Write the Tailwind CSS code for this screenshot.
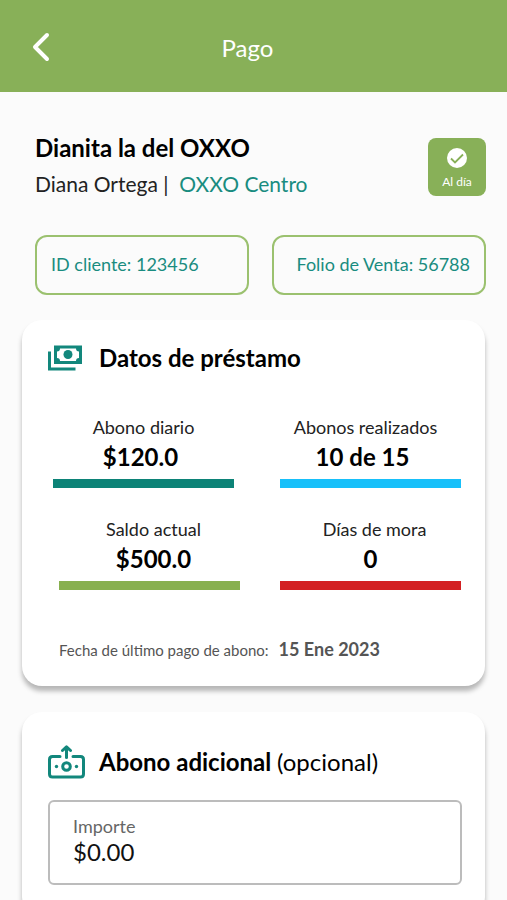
<!DOCTYPE html>
<html lang="es">
  <head>
    <meta charset="UTF-8" />
    <meta name="viewport" content="width=device-width, initial-scale=1.0" />
    <title>Pago</title>
    <script src="https://cdn.jsdelivr.net/npm/@tailwindcss/browser@4"></script>
  </head>
  <body class="min-h-screen overflow-x-hidden bg-[#fbfbfb] font-['Lato',sans-serif] text-black">
    <header class="grid h-[92px] grid-cols-[1fr_auto_1fr] items-center bg-[#88b058] pr-3 text-white">
      <button type="button" aria-label="Regresar" class="ml-8 w-6 cursor-pointer">
        <svg class="h-8 w-5" viewBox="0 0 20 32" fill="none" stroke="currentColor" stroke-width="4" stroke-linecap="round" stroke-linejoin="round">
          <path d="M15 5 L3 17 L15 29" />
        </svg>
      </button>
      <h1 class="pt-1 text-2xl">Pago</h1>
    </header>

    <main class="pb-8">
      <!-- Cliente -->
      <section class="flex items-start justify-between pt-[46px] pr-[21px] pl-[35px]">
        <div class="-mt-1">
          <h2 class="text-2xl leading-7 font-bold">Dianita la del OXXO</h2>
          <p class="mt-2 text-[21px] leading-7 whitespace-pre text-[#222]">Diana Ortega |  <a href="#" class="text-[#198c80]">OXXO Centro</a></p>
        </div>
        <div class="flex size-[58px] flex-col items-center rounded-lg bg-[#88b058] pt-2.5 text-white">
          <svg class="size-5" viewBox="0 0 20 20">
            <circle cx="10" cy="10" r="10" fill="#fff" />
            <path d="M4 10.5 L8 14.5 L16 6.5" fill="none" stroke="#88b058" stroke-width="1.8" />
          </svg>
          <span class="mt-1.5 text-xs leading-4">Al día</span>
        </div>
      </section>

      <div class="mt-[37px] grid grid-cols-2 gap-[23px] pr-[21px] pl-[35px] text-lg leading-6 text-[#198c80]">
        <div class="rounded-xl border-2 border-[#9bc16f] px-3.5 pt-[15px] pb-[17px]">ID cliente: 123456</div>
        <div class="rounded-xl border-2 border-[#9bc16f] px-3.5 pt-[15px] pb-[17px] text-right whitespace-nowrap">Folio de Venta: 56788</div>
      </div>

      <!-- Préstamo -->
      <section class="mx-[22px] mt-[25px] rounded-[20px] bg-white pt-5 pr-6 pb-[22px] pl-[26px] shadow-[0_5px_5px_rgba(0,0,0,0.28)]">
        <div class="flex items-center gap-4">
          <svg class="h-[26px] w-[35px] shrink-0" viewBox="0 0 35 26" fill="none">
            <path d="M1.5 6.5 V24 H27.5" stroke="#12877c" stroke-width="3" />
            <path fill="#12877c" fill-rule="evenodd" d="M6 0.5 H34 V19 H6 Z M12 3.5 A3 3 0 0 1 9 6.5 V13 A3 3 0 0 1 12 16 H28 A3 3 0 0 1 31 13 V6.5 A3 3 0 0 1 28 3.5 Z" />
            <circle cx="20" cy="9.5" r="4.5" fill="#12877c" />
          </svg>
          <h2 class="text-2xl leading-9 font-bold">Datos de préstamo</h2>
        </div>

        <div class="mt-[37px] grid grid-cols-2 gap-x-[46px] pl-[5px] text-center">
          <div class="border-b-9 border-[#0c8377] pb-1.5">
            <p class="text-lg leading-7 text-[#222]">Abono diario</p>
            <p class="pr-1.5 text-2xl leading-8 font-bold">$120.0</p>
          </div>
          <div class="border-b-9 border-[#17c0fa] pb-1.5">
            <p class="pr-2.5 text-lg leading-7 text-[#222]">Abonos realizados</p>
            <p class="pr-4 text-2xl leading-8 font-bold">10 de 15</p>
          </div>
        </div>
        <div class="mt-[27px] grid grid-cols-2 gap-x-10 pl-[11px] text-center">
          <div class="border-b-9 border-[#88b04f] pb-1.5">
            <p class="pl-2 text-lg leading-7 text-[#222]">Saldo actual</p>
            <p class="pl-2 text-2xl leading-8 font-bold">$500.0</p>
          </div>
          <div class="border-b-9 border-[#d32022] pb-1.5">
            <p class="pl-2 text-lg leading-7 text-[#222]">Días de mora</p>
            <p class="text-2xl leading-8 font-bold">0</p>
          </div>
        </div>

        <p class="mt-[45px] flex items-baseline gap-2.5 pl-[11px] leading-7 text-[#555]">
          <span class="text-[15px]">Fecha de último pago de abono:</span>
          <strong class="text-lg leading-7 font-bold">15 Ene 2023</strong>
        </p>
      </section>

      <!-- Abono adicional -->
      <section class="mx-[22px] mt-[26px] rounded-[20px] bg-white pt-8 pr-[23px] pb-8 pl-[26px] shadow-[0_5px_5px_rgba(0,0,0,0.28)]">
        <div class="flex items-center gap-3.5">
          <svg class="h-[34px] w-[37px] shrink-0" viewBox="0 0 37 34" fill="none" stroke="#12877c" stroke-width="3" stroke-linecap="round" stroke-linejoin="round">
            <path d="M12 11.5 H4.5 Q1.5 11.5 1.5 14.5 V29 Q1.5 32 4.5 32 H32.5 Q35.5 32 35.5 29 V14.5 Q35.5 11.5 32.5 11.5 H25" />
            <path d="M18.5 12.5 V3" />
            <path d="M14.5 5.5 L18.5 1.8 L22.5 5.5" />
            <circle cx="18.5" cy="21.5" r="3.8" />
            <circle cx="8.5" cy="21.5" r="1.7" fill="#12877c" stroke="none" />
            <circle cx="28.5" cy="21.5" r="1.7" fill="#12877c" stroke="none" />
          </svg>
          <h2 class="text-2xl leading-9 font-bold">Abono adicional <span class="font-normal">(opcional)</span></h2>
        </div>

        <div class="mt-5 rounded-md border-2 border-[#bcbcbc] px-[23px] pt-3 pb-[17px]">
          <label for="importe" class="block text-lg leading-6 text-[#666]">Importe</label>
          <input id="importe" type="text" inputmode="decimal" value="$0.00" class="block w-full text-2xl leading-7 text-[#111] outline-none" />
        </div>
      </section>
    </main>
  </body>
</html>
